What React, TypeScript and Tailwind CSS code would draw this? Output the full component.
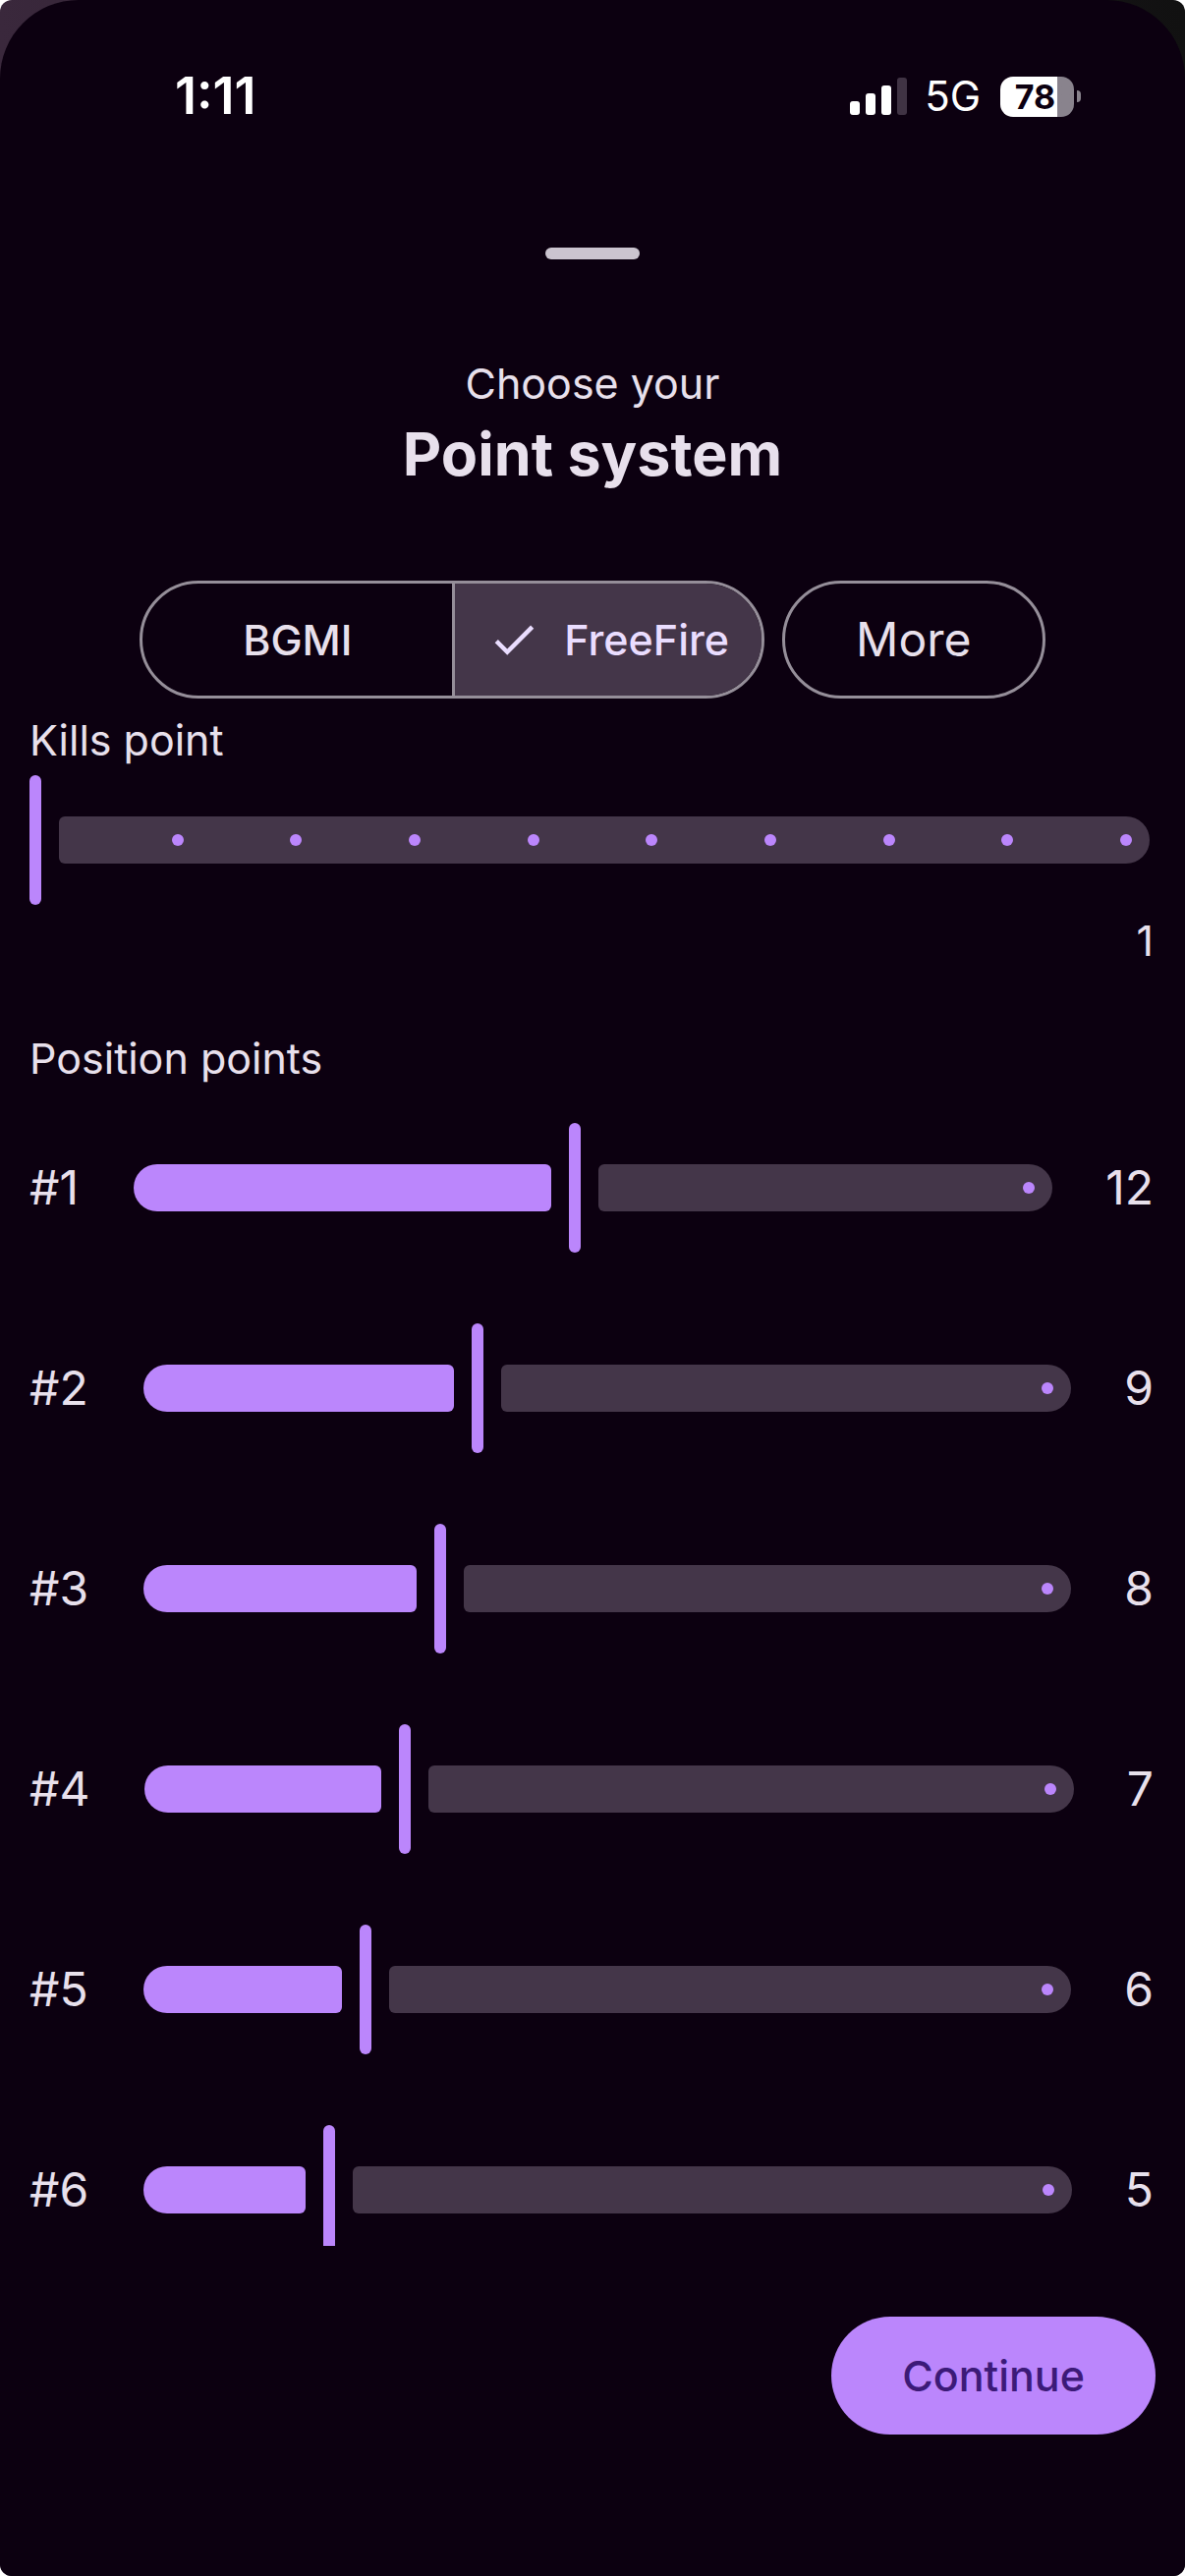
import React, { useState } from 'react';

interface PointSliderProps {
  id: string;
  value: number;
  min?: number;
  max: number;
  ticks?: boolean;
  onChange: (value: number) => void;
}

function PointSlider({ id, value, min = 0, max, ticks = false, onChange }: PointSliderProps) {
  const filled = (value - min) / (max - min);
  const steps = Array.from({ length: max - min + 1 }, (_, i) => i);

  return (
    <div className="relative flex h-36 min-w-0 flex-1 items-center px-[6px]">
      {filled > 0 && (
        <div className="shrink-0" style={{ width: `${filled * 100}%` }}>
          <div className="mr-6 h-12 rounded-l-[24px] rounded-r-[6px] bg-[#bb86fc]" />
        </div>
      )}
      <div className="-ml-[6px] h-[132px] w-3 shrink-0 rounded-full bg-[#bb86fc]" />
      <div className="ml-[18px] h-12 flex-1 rounded-l-[6px] rounded-r-[24px] bg-[#443649]" />
      <div className="pointer-events-none absolute inset-x-6 flex items-center justify-between">
        {ticks ? (
          steps.map((step) => (
            <span
              key={step}
              className={step / (max - min) > filled ? 'h-3 w-3 rounded-full bg-[#bb86fc]' : 'h-3 w-3'}
            />
          ))
        ) : (
          <span className="ml-auto h-3 w-3 rounded-full bg-[#bb86fc]" />
        )}
      </div>
      <input
        id={id}
        type="range"
        min={min}
        max={max}
        value={value}
        onChange={(e) => onChange(parseInt(e.target.value))}
        className="absolute inset-0 h-full w-full cursor-pointer opacity-0"
      />
    </div>
  );
}

function StatusBar() {
  return (
    <div className="flex h-[196px] items-center justify-between pr-[106px] pl-[178px]">
      <span className="text-[52px] leading-[60px] font-semibold text-white">1:11</span>
      <div className="flex items-center">
        <svg className="h-[38px] w-[58px]" viewBox="0 0 58 38" fill="#fff">
          <rect x="0" y="24" width="10" height="14" rx="3" />
          <rect x="16" y="16" width="10" height="22" rx="3" />
          <rect x="32" y="8" width="10" height="30" rx="3" />
          <rect x="48" y="0" width="10" height="38" rx="3" fill="#403344" />
        </svg>
        <span className="ml-[18px] text-[42px] leading-[60px] text-white">5G</span>
        <div className="ml-5 flex h-[41px] w-[75px] items-center justify-center overflow-hidden rounded-[13px] bg-linear-to-r from-white from-78% to-[#89838d] to-78% pr-1">
          <span className="text-[34px] leading-[41px] font-bold text-[#0c0010]">78</span>
        </div>
        <div className="ml-[3px] h-3 w-1 rounded-r-full bg-[#89838d]" />
      </div>
    </div>
  );
}

const freeFire = [12, 9, 8, 7, 6, 5];
const bgmi = [10, 6, 5, 4, 3, 2];

export default function App() {
  const [system, setSystem] = useState('FreeFire');
  const [kills, setKills] = useState(1);
  const [points, setPoints] = useState(freeFire);

  const choose = (name: string) => {
    setSystem(name);
    setPoints(name === 'BGMI' ? bgmi : freeFire);
  };

  return (
    <div className="h-screen bg-white font-[Inter,sans-serif] text-[#e8e0ec]">
      <div className="h-full overflow-hidden rounded-[12px] bg-linear-to-r from-[#3a283c] to-[#111111]">
        <main className="flex h-full flex-col rounded-t-[80px] bg-[#0c0010]">
          <StatusBar />

          <div className="mx-auto mt-14 h-3 w-24 shrink-0 rounded-full bg-[#cbc4cf]" />

          <header className="mt-24 text-center">
            <p className="text-[43px] leading-[60px]">Choose your</p>
            <h1 className="text-[61px] leading-[84px] font-bold">Point system</h1>
          </header>

          <div className="mt-[87px] flex justify-center gap-[18px]">
            <div className="grid h-[120px] grid-cols-2 overflow-hidden rounded-full border-3 border-[#958e99] text-[43px] font-medium">
              {['BGMI', 'FreeFire'].map((name) => (
                <button
                  key={name}
                  type="button"
                  aria-pressed={system === name}
                  onClick={() => choose(name)}
                  className={`flex items-center justify-center gap-6 border-[#958e99] px-[33px] not-first:border-l-3 ${
                    system === name ? 'bg-[#443649] text-[#eaddff]' : ''
                  }`}
                >
                  {system === name && (
                    <svg className="h-[54px] w-[54px]" viewBox="0 0 24 24" fill="currentColor">
                      <path d="M9 16.17 4.83 12l-1.42 1.41L9 19 21 7l-1.41-1.41z" />
                    </svg>
                  )}
                  {name}
                </button>
              ))}
            </div>
            <button type="button" className="h-[120px] rounded-full border-3 border-[#958e99] px-[72px] text-[48px]">
              More
            </button>
          </div>

          <div className="mt-3 min-h-0 flex-1 overflow-y-auto px-[30px] [scrollbar-width:none]">
            <label htmlFor="kills" className="block text-[43px] leading-[60px]">
              Kills point
            </label>
            <div className="flex">
              <PointSlider id="kills" value={kills} min={1} max={10} ticks onChange={setKills} />
            </div>
            <p className="pr-[2px] text-right text-[43px] leading-[60px]">{kills}</p>

            <h2 className="mt-[60px] text-[43px] leading-[60px]">Position points</h2>
            {points.map((value, i) => (
              <div key={i} className="flex items-center gap-12 py-[30px] text-[48px]">
                <label htmlFor={`position-${i}`} className="pr-[2px]">
                  #{i + 1}
                </label>
                <PointSlider
                  id={`position-${i}`}
                  value={value}
                  max={25}
                  onChange={(next) => setPoints(points.map((p, j) => (j === i ? next : p)))}
                />
                <span className="pr-[2px]">{value}</span>
              </div>
            ))}
          </div>

          <footer className="flex justify-end px-[30px] pt-[72px] pb-36">
            <button type="button" className="h-[120px] rounded-full bg-[#bb86fc] px-[72px] text-[43px] font-medium text-[#3c1a78]">
              Continue
            </button>
          </footer>
        </main>
      </div>
    </div>
  );
}
